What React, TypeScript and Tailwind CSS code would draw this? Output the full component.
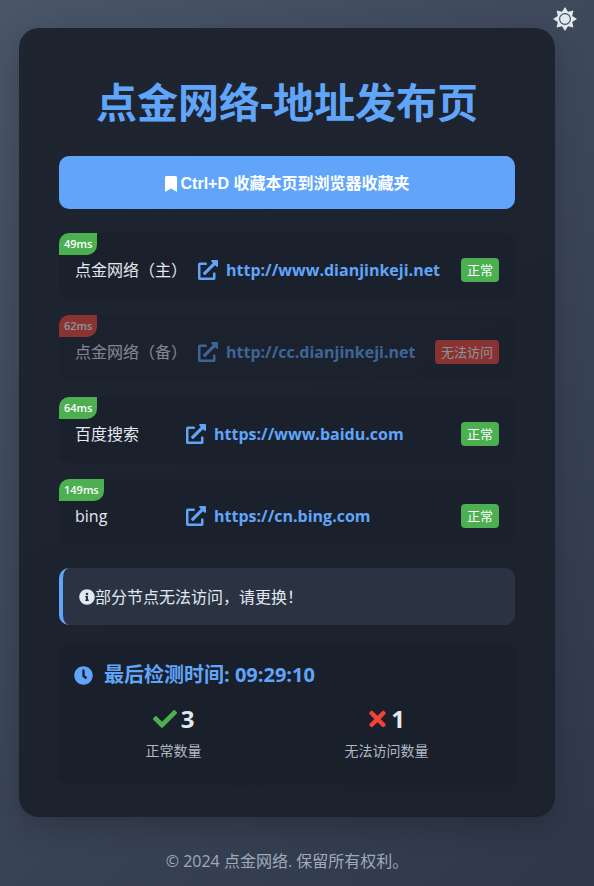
import clsx from 'clsx';
import { FaBookmark, FaCheck, FaClock, FaExternalLinkAlt, FaInfoCircle, FaTimes } from 'react-icons/fa';

const nodes = [
  { name: '点金网络（主）', url: 'http://www.dianjinkeji.net', latency: 49, ok: true },
  { name: '点金网络（备）', url: 'http://cc.dianjinkeji.net', latency: 62, ok: false },
  { name: '百度搜索', url: 'https://www.baidu.com', latency: 64, ok: true },
  { name: 'bing', url: 'https://cn.bing.com', latency: 149, ok: true },
];

function SunIcon() {
  return (
    <svg viewBox="0 0 24 24" className="size-6">
      <path
        fill="currentColor"
        d="M12 0l3 4.8 5.4-1.2-1.2 5.4L24 12l-4.8 3 1.2 5.4-5.4-1.2L12 24l-3-4.8-5.4 1.2L4.8 15 0 12l4.8-3L3.6 3.6 9 4.8z"
      />
      <circle cx="12" cy="12" r="5.4" fill="none" stroke="#3d4859" strokeWidth="1.1" />
    </svg>
  );
}

export default function App() {
  const okCount = nodes.filter((n) => n.ok).length;

  return (
    <div className="relative min-h-screen bg-linear-135 from-[#4a5568] to-[#2d3748] pt-7 pr-[39px] pb-3 pl-[19px] font-['Open_Sans','Noto_Sans_CJK_SC',sans-serif] text-base text-[#e2e8f0]">
      <button type="button" aria-label="切换主题" className="absolute top-[7px] right-[17px]">
        <SunIcon />
      </button>

      <main className="rounded-[20px] bg-linear-150 from-[#1e2531] to-[#1b212d] px-10 pt-11 pb-9 shadow-[0_10px_30px_rgba(0,0,0,0.2)]">
        <h1 className="text-center text-[41px] leading-[60px] font-bold whitespace-nowrap text-[#60a5fa]">
          点金网络-地址发布页
        </h1>

        <button
          type="button"
          className="mt-6 flex h-[53px] w-full items-center justify-center gap-1 rounded-[10px] bg-[#60a5fa] pt-[2px] font-['Liberation_Sans','Noto_Sans_CJK_SC',sans-serif] font-bold text-white"
        >
          <FaBookmark className="h-4 w-3" />
          Ctrl+D 收藏本页到浏览器收藏夹
        </button>

        <ul className="mt-6 flex flex-col gap-4">
          {nodes.map((node) => (
            <li
              key={node.url}
              className={clsx(
                'relative flex h-[66px] items-center rounded-[10px] bg-[#1b212c] px-4 pt-2',
                !node.ok && 'opacity-50',
              )}
            >
              <span
                className={clsx(
                  'absolute top-0 left-0 rounded-tl-[10px] rounded-br-[10px] px-[5px] text-[11px] leading-[22px] font-semibold text-white',
                  node.ok ? 'bg-[#4caf50]' : 'bg-[#f44336]',
                )}
              >
                {node.latency}ms
              </span>
              <span className="min-w-[100px] whitespace-nowrap">{node.name}</span>
              <a href={node.url} className="ml-[11px] flex flex-1 items-center gap-2 font-bold text-[#60a5fa]">
                <FaExternalLinkAlt className="size-5 shrink-0" />
                {node.url}
              </a>
              <span
                className={clsx(
                  'rounded px-[6px] text-[13px] leading-6 whitespace-nowrap text-white',
                  node.ok ? 'bg-[#4caf50]' : 'bg-[#f44336]',
                )}
              >
                {node.ok ? '正常' : '无法访问'}
              </span>
            </li>
          ))}
        </ul>

        <div
          role="status"
          className="mt-[23px] flex h-[57px] items-center rounded-[10px] border-l-4 border-[#60a5fa] bg-[#2b3343] px-4"
        >
          <FaInfoCircle className="size-4" />
          部分节点无法访问，请更换！
        </div>

        <section className="mt-5 rounded-[10px] bg-[#19202c] px-[15px] pt-4 pb-[18px] shadow-[0_2px_5px_rgba(0,0,0,0.1)]">
          <h2 className="flex items-center gap-[11px] text-xl font-bold text-[#60a5fa]">
            <FaClock className="size-[19px]" />
            最后检测时间: 09:29:10
          </h2>
          <dl className="mt-[14px] flex justify-around text-center">
            <div className="flex flex-col-reverse gap-1">
              <dt className="text-sm leading-6 text-[#b0b8c4]">正常数量</dt>
              <dd className="flex items-center justify-center gap-1 text-2xl font-bold">
                <FaCheck className="size-6 text-[#4caf50]" />
                {okCount}
              </dd>
            </div>
            <div className="flex flex-col-reverse gap-1">
              <dt className="text-sm leading-6 text-[#b0b8c4]">无法访问数量</dt>
              <dd className="flex items-center justify-center gap-1 text-2xl font-bold">
                <FaTimes className="h-6 w-[19px] text-[#f44336]" />
                {nodes.length - okCount}
              </dd>
            </div>
          </dl>
        </section>
      </main>

      <footer className="mt-8 text-center text-[#a0aab8]">© 2024 点金网络. 保留所有权利。</footer>
    </div>
  );
}
